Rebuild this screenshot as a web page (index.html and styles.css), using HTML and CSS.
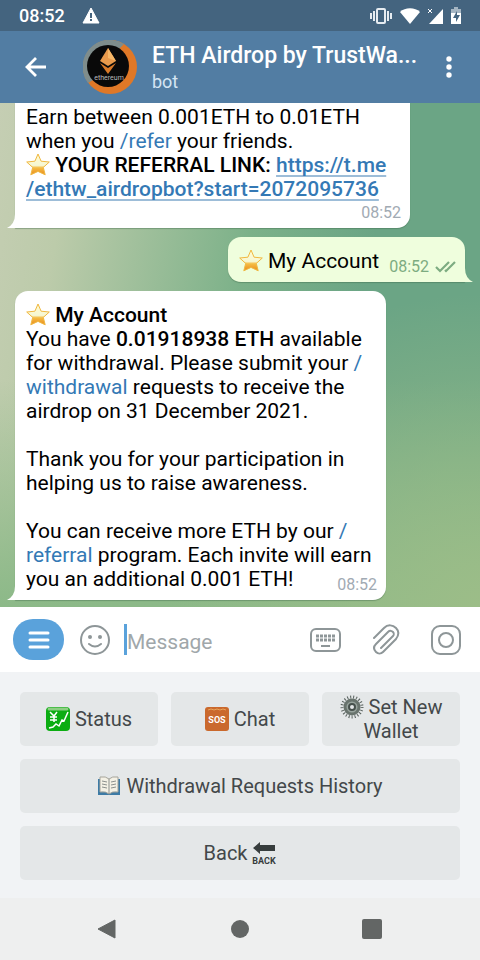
FILE: index.html
```html
<!DOCTYPE html>
<html lang="en">
	<head>
		<meta charset="UTF-8" />
		<meta name="viewport" content="width=device-width, initial-scale=1.0" />
		<title>ETH Airdrop by TrustWallet</title>
		<link rel="stylesheet" href="styles.css">
	</head>
	<body>
		<!-- shared emoji -->
		<svg class="sprite" aria-hidden="true">
			<defs>
				<linearGradient id="gold" x1="0" y1="0" x2="0" y2="1">
					<stop offset="0" stop-color="#fffbd0" />
					<stop offset="0.55" stop-color="#f6f7d3" />
					<stop offset="0.66" stop-color="#f5bd45" />
					<stop offset="1" stop-color="#e98a1c" />
				</linearGradient>
				<symbol id="star" viewBox="0 0 24 24">
					<path d="M12 1l3.1 7.2 8.2.8-6 5.4 1.9 7.4L12 18.4l-7.2 3.4 1.9-7.4-6-5.4 8.2-.8z" fill="url(#gold)" stroke="#f0b840" stroke-width="1" stroke-linejoin="round" />
				</symbol>
			</defs>
		</svg>

		<div class="screen">
			<div class="status-bar">
				<span class="clock">08:52</span>
				<svg class="warning" width="18" height="17" viewBox="0 0 18 17"><path d="M9 1l8 15H1z" fill="#fff" stroke="#fff" stroke-linejoin="round" /><path d="M9 6v5M9 12v2" stroke="#44647f" stroke-width="2" /></svg>
				<div class="status-icons">
					<svg width="22" height="16" viewBox="0 0 22 16"><rect x="7" y="1" width="8" height="14" rx="1" fill="none" stroke="#e6ecf1" stroke-width="2" /><path d="M4 3v10M18 3v10M1 5v6M21 5v6" stroke="#e6ecf1" stroke-width="2" /></svg>
					<svg width="20" height="16" viewBox="0 0 20 16"><path d="M0 4C5-1 15-1 20 4L10 16z" fill="#fff" /></svg>
					<svg width="15" height="16" viewBox="0 0 15 16"><path d="M15 1v15H1z" fill="#fff" /><path d="M0 1l4 4M4 1L0 5" stroke="#fff" stroke-width="1" /></svg>
					<svg width="10" height="17" viewBox="0 0 10 17"><path d="M3 0h4v2h3v4H0V2h3z" fill="#a5b5c2" /><path d="M0 6h10v11H0z" fill="#fff" /><path d="M6 4L2 11h3v4l4-7H6z" fill="#44647f" /></svg>
				</div>
			</div>

			<header class="header">
				<button class="icon-button back" type="button" aria-label="Go back">
					<svg width="22" height="20" viewBox="0 0 22 20"><path d="M22 10H3M12 1l-9 9 9 9" fill="none" stroke="#fff" stroke-width="2.8" /></svg>
				</button>
				<svg class="avatar" width="54" height="54" viewBox="0 0 54 54">
					<circle cx="27" cy="27" r="27" fill="#e07827" />
					<path d="M5 43A27 27 0 0 1 41 4L36 9 10 40z" fill="#7f8d8c" />
					<circle cx="25" cy="26" r="21" fill="#090909" />
					<path d="M25 8l8 13-8 5-8-5z" fill="#e99a4c" />
					<path d="M25 8l8 13-8-3z" fill="#f7b767" />
					<path d="M17 23l8 5 8-5-8 11z" fill="#d87928" />
					<text x="26" y="40" text-anchor="middle" class="avatar-text">ethereum</text>
				</svg>
				<div class="chat-info">
					<h1 class="chat-title">ETH Airdrop by TrustWa...</h1>
					<p class="chat-status">bot</p>
				</div>
				<button class="icon-button more" type="button" aria-label="More options">
					<svg width="6" height="22" viewBox="0 0 6 22"><g fill="#fff"><circle cx="3" cy="3" r="2.7" /><circle cx="3" cy="11" r="2.7" /><circle cx="3" cy="19" r="2.7" /></g></svg>
				</button>
			</header>

			<main class="chat">
				<article class="message message-cut">
					<p>
						Earn between 0.001ETH to 0.01ETH<br />
						when you <a href="#refer">/refer</a> your friends.<br />
						<svg class="emoji"><use href="#star" /></svg> <b>YOUR REFERRAL LINK: <a class="url" href="#start">https://t.me<br />/ethtw_airdropbot?start=2072095736</a></b>
					</p>
					<time class="time time-row">08:52</time>
					<svg class="tail" viewBox="0 0 8 14"><path d="M8 0v14H0Q8 10 8 0z" /></svg>
				</article>

				<article class="message message-out">
					<p><svg class="emoji"><use href="#star" /></svg> My Account</p>
					<time class="time">08:52</time>
					<svg class="checks" width="21" height="12" viewBox="0 0 21 12"><path d="M1 6l4 4L14 1M10 9l1 1L20 1" fill="none" stroke="#7dac81" stroke-width="2.2" /></svg>
					<svg class="tail" viewBox="0 0 8 14"><path d="M0 0v14h8Q0 10 0 0z" /></svg>
				</article>

				<article class="message message-account">
					<p>
						<svg class="emoji"><use href="#star" /></svg> <b>My Account</b><br />
						You have <b>0.01918938 ETH</b> available<br />
						for withdrawal. Please submit your <a href="#withdrawal">/<br />withdrawal</a> requests to receive the<br />
						airdrop on 31 December 2021.
					</p>
					<p>
						Thank you for your participation in<br />
						helping us to raise awareness.
					</p>
					<div class="last-line">
						<p>
							You can receive more ETH by our <a href="#referral">/<br />referral</a> program. Each invite will earn<br />
							you an additional 0.001 ETH!
						</p>
						<time class="time time-over">08:52</time>
					</div>
					<svg class="tail" viewBox="0 0 8 14"><path d="M8 0v14H0Q8 10 8 0z" /></svg>
				</article>
			</main>

			<form class="composer">
				<button class="menu-button" type="button" aria-label="Bot menu">
					<svg width="22" height="18" viewBox="0 0 22 18"><path d="M2 2h18M2 9h18M2 16h18" stroke="#fff" stroke-width="3" stroke-linecap="round" /></svg>
				</button>
				<button class="icon-button smile" type="button" aria-label="Emoji">
					<svg width="30" height="30" viewBox="0 0 30 30"><circle cx="15" cy="15" r="14" fill="none" stroke="#8e9698" stroke-width="2" /><circle cx="10" cy="12" r="2" fill="#8e9698" /><circle cx="20" cy="12" r="2" fill="#8e9698" /><path d="M9 19q6 5 12 0" fill="none" stroke="#8e9698" stroke-width="2" stroke-linecap="round" /></svg>
				</button>
				<input class="message-input" type="text" placeholder="Message" aria-label="Message" />
				<button class="icon-button" type="button" aria-label="Bot keyboard">
					<svg width="31" height="24" viewBox="0 0 31 24"><rect x="1" y="1" width="29" height="22" rx="5" fill="none" stroke="#8e9698" stroke-width="2" /><path d="M6 8h19M6 12h19" stroke="#8e9698" stroke-width="3" stroke-dasharray="3 1" /><path d="M11 18h9" stroke="#8e9698" stroke-width="2" /></svg>
				</button>
				<button class="icon-button" type="button" aria-label="Attach file">
					<svg width="28" height="32" viewBox="0 0 28 32"><path d="M2 14L12 4c4-4 9-3 12 0s3 7 0 11L11 28c-2 2-5 2-7 0s-3-5 0-8L16 8c2-2 4-1 5 0s1 3 0 4L9 24" fill="none" stroke="#8e9698" stroke-width="2" stroke-linecap="round" /></svg>
				</button>
				<button class="icon-button" type="button" aria-label="Record video">
					<svg width="30" height="30" viewBox="0 0 30 30"><rect x="1" y="1" width="28" height="28" rx="8" fill="none" stroke="#8e9698" stroke-width="2" /><circle cx="15" cy="15" r="7" fill="none" stroke="#8e9698" stroke-width="2" /></svg>
				</button>
			</form>

			<section class="keyboard">
				<button class="key" type="button">
					<span><svg class="emoji" viewBox="0 0 24 24"><rect width="24" height="24" rx="4" fill="#0bad12" /><path d="M3 2h18" stroke="#8dcf83" stroke-width="3" stroke-linecap="round" /><path d="M4 5l4 4 3-4M8 9v6M4 10h7M4 13h7M3 21l4-1 3-3 3 2 3-6 2 1 4-9" fill="none" stroke="#fff" stroke-width="1.5" /></svg> Status</span>
				</button>
				<button class="key" type="button">
					<span><svg class="emoji" viewBox="0 0 24 24"><rect width="24" height="24" rx="3" fill="#ca692d" /><path d="M3 3l3-1 3 1 3-1 3 1 3-1 3 1" fill="none" stroke="#e9a55c" stroke-width="1" /><text x="12" y="16" text-anchor="middle" class="emoji-text sos">SOS</text></svg> Chat</span>
				</button>
				<button class="key" type="button">
					<span><svg class="emoji" viewBox="0 0 24 24"><circle cx="12" cy="12" r="10" fill="none" stroke="#59625f" stroke-width="3" stroke-dasharray="1 2" /><circle cx="12" cy="12" r="7" fill="#97a39d" stroke="#68736d" stroke-width="3" /><circle cx="12" cy="12" r="3" fill="#e4e7e8" stroke="#46504c" stroke-width="2" /></svg> Set New Wallet</span>
				</button>
				<button class="key key-wide" type="button">
					<span><svg class="emoji" viewBox="0 0 24 24"><path d="M1 5h22v16H1z" fill="#3d7ba5" /><path d="M3 3q6-1 9 2 3-3 9-2v15q-6-1-9 2-3-3-9-2z" fill="#f4f1e5" stroke="#a5a49b" /><path d="M12 5v15M5 7l5 1M5 10l5 1M5 13l5 1M14 8l5-1M14 11l5-1M14 14l5-1" stroke="#8c908d" stroke-width="1" /></svg> Withdrawal Requests History</span>
				</button>
				<button class="key key-wide" type="button">
					<span>Back <svg class="emoji" viewBox="0 0 24 24"><path d="M1 7l7-6v3h15v6H8v3z" fill="#373d3d" /><text x="12" y="23" text-anchor="middle" class="emoji-text">BACK</text></svg></span>
				</button>
			</section>

			<nav class="nav-bar">
				<button class="icon-button nav-button" type="button" aria-label="Back"><svg width="20" height="20" viewBox="0 0 20 20"><path d="M17 1v18L0 10z" fill="#636665" stroke="#636665" stroke-linejoin="round" /></svg></button>
				<button class="icon-button nav-button" type="button" aria-label="Home"><svg width="20" height="20" viewBox="0 0 20 20"><circle cx="10" cy="10" r="9" fill="#636665" /></svg></button>
				<button class="icon-button nav-button" type="button" aria-label="Recent apps"><svg width="20" height="20" viewBox="0 0 20 20"><rect width="20" height="20" rx="2" fill="#636665" /></svg></button>
			</nav>
		</div>
	</body>
</html>
```

FILE: styles.css
```css
:root {
	box-sizing: border-box;
}
*,
::before,
::after {
	box-sizing: inherit;
}
body {
	margin: 0;
	font-family: Roboto, "Liberation Sans", sans-serif;
	font-size: 20px;
	line-height: 24px;
	color: #000;
}
h1,
p {
	margin: 0;
}
button,
input {
	padding: 0;
	border: 0;
	font: inherit;
	background: none;
}
svg {
	display: block;
	flex: none;
}
b {
	font-weight: 500;
}
a {
	color: #3479b5;
	text-decoration: none;
}
.sprite {
	position: absolute;
	width: 0;
	height: 0;
}
.emoji {
	display: inline-block;
	width: 24px;
	height: 24px;
	vertical-align: bottom;
}
.screen {
	display: flex;
	flex-direction: column;
	min-height: 100vh;
}
.icon-button {
	display: flex;
	align-items: center;
	justify-content: center;
	flex: none;
}

/* status bar */
.status-bar {
	display: flex;
	align-items: center;
	height: 31px;
	padding: 0 19px;
	background-color: #44647f;
}
.clock {
	font-size: 18px;
	font-weight: 500;
	color: #fff;
}
.warning {
	margin-left: 17px;
}
.status-icons {
	display: flex;
	align-items: center;
	gap: 8px;
	margin-left: auto;
}

/* header */
.header {
	display: flex;
	align-items: center;
	height: 72px;
	padding: 0 16px 0 24px;
	color: #fff;
	background-color: #527da3;
}
.avatar {
	margin: 0 15px 0 37px;
}
.avatar-text {
	font-size: 7px;
	fill: #bbb;
}
.chat-info {
	flex: 1;
	min-width: 0;
	padding-top: 2px;
}
.chat-title {
	font-size: 23px;
	font-weight: 500;
	line-height: 28px;
	white-space: nowrap;
}
.chat-status {
	font-size: 18px;
	color: #d5e5f3;
}
.more {
	width: 30px;
}

/* chat */
.chat {
	display: flex;
	flex: 1;
	flex-direction: column;
	align-items: flex-start;
	gap: 9px;
	padding: 0 15px 7px;
	font-size: 21px;
	background:
		radial-gradient(circle at 100% 100%, #9cbd88 0, rgba(147, 186, 138, 0) 45%),
		linear-gradient(to top, #8cb988 0, rgba(140, 185, 136, 0) 45%),
		linear-gradient(100deg, #c5ceb3 0, #bccbaa 14%, #7cb189 48%, #6ba585 70%, #6ba585 100%);
}
.message {
	position: relative;
	max-width: 100%;
	padding: 12px 9px 9px 11px;
	background-color: #fff;
	border-radius: 13px 13px 13px 0;
	box-shadow: 0 1px 1px rgba(60, 100, 70, 0.4);
}
.message p + p,
.last-line {
	margin-top: 24px;
}
.message-cut {
	width: 395px;
	padding-top: 2px;
	padding-bottom: 3px;
	border-radius: 0 0 13px 0;
}
.message-account {
	width: 371px;
}
.message-out {
	display: flex;
	align-items: flex-end;
	align-self: flex-end;
	gap: 6px;
	background-color: #effedd;
	border-radius: 13px 13px 0 13px;
}
.tail {
	position: absolute;
	bottom: 0;
	left: -8px;
	width: 8px;
	height: 14px;
	fill: #fff;
}
.message-out .tail {
	right: -8px;
	left: auto;
	fill: #effedd;
}
.url {
	text-decoration: underline;
	text-decoration-color: #9dbdd8;
	text-decoration-thickness: 2px;
	text-underline-offset: 3px;
	text-decoration-skip-ink: none;
}
.time {
	font-size: 16px;
	color: #a1aab3;
}
.time-row {
	display: block;
	text-align: right;
}
.message-out .time {
	margin-left: 4px;
	line-height: 12px;
	color: #7dac81;
}
.last-line {
	position: relative;
}
.time-over {
	position: absolute;
	right: 0;
	bottom: -6px;
}

/* message input */
.composer {
	display: flex;
	align-items: center;
	height: 65px;
	padding: 0 19px 0 13px;
	background-color: #fff;
}
.menu-button {
	display: flex;
	align-items: center;
	justify-content: center;
	flex: none;
	width: 51px;
	height: 41px;
	border-radius: 20px;
	background-color: #5aa2db;
}
.smile {
	margin: 0 14px 0 16px;
}
.message-input {
	flex: 1;
	min-width: 0;
	height: 31px;
	padding-top: 4px;
	font-size: 21px;
	border-left: 3px solid #5aa2db;
	outline: 0;
}
.message-input::placeholder {
	color: #a0a7aa;
	opacity: 1;
}
.composer .icon-button + .icon-button {
	margin-left: 31px;
}

/* bot keyboard */
.keyboard {
	display: grid;
	grid-template-columns: repeat(3, 1fr);
	gap: 13px;
	padding: 20px 20px 18px;
	background-color: #f1f3f5;
}
.key {
	min-height: 54px;
	padding: 3px 14px;
	color: #43484a;
	text-align: center;
	border-radius: 5px;
	background-color: #e4e7e8;
}
.key-wide {
	grid-column: 1 / -1;
}
.emoji-text {
	font-size: 9px;
	font-weight: 700;
	fill: #373d3d;
}
.sos {
	fill: #fff;
}

/* navigation */
.nav-bar {
	display: flex;
	justify-content: center;
	height: 62px;
	background-color: #eeefef;
}
.nav-button {
	width: 132px;
}
```
